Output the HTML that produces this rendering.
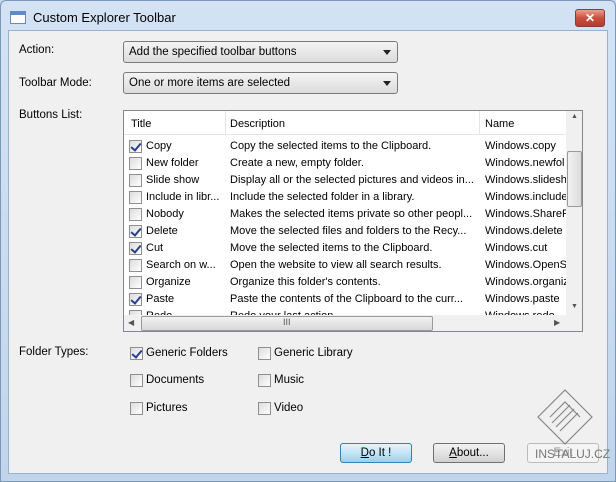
<!DOCTYPE html>
<html><head><style>
*{box-sizing:border-box;margin:0;padding:0}
body{width:616px;height:482px;overflow:hidden;background:#c5d9ee;font-family:"Liberation Sans",sans-serif;font-size:11.5px;color:#000;position:relative}
.frame{position:absolute;left:0;top:0;width:616px;height:482px;background:linear-gradient(#d3e3f4,#c0d5ec);border:1px solid #7e97b6;border-radius:6px 6px 0 0}
.title{position:absolute;left:33px;top:10px;font-size:13px;color:#000}
.ticon{position:absolute;left:10px;top:11px;width:16px;height:13px;border:1px solid #6e8aad;background:#fff}
.ticon:before{content:"";position:absolute;left:0;top:0;right:0;height:3px;background:#5c8bd0}
.close{position:absolute;left:575px;top:9px;width:30px;height:18px;border:1px solid #8a3b36;border-radius:3px;background:linear-gradient(#e8a091,#c9503f 50%,#b83a2a);color:#fff;font-weight:bold;text-align:center;font-size:12px;line-height:16px}
.content{position:absolute;left:8px;top:30px;width:600px;height:444px;background:#f0f0f0;border:1px solid #9ab0cc}
.a{position:absolute;white-space:nowrap}
.combo{position:absolute;left:123px;width:275px;height:22px;border:1px solid #7a7a7a;border-radius:3px;background:linear-gradient(#f4f4f4,#e8e8e8 50%,#dcdcdc);padding:4px 5px;font-size:11.5px}
.combo:after{content:"";position:absolute;right:6px;top:8px;border:4px solid transparent;border-top:5px solid #222;border-bottom:0}
.list{position:absolute;left:123px;top:110px;width:460px;height:222px;border:1px solid #828790;background:#fff;overflow:hidden;font-size:11px}
.hdr{position:absolute;top:0;left:0;height:24px;width:442px;border-bottom:1px solid #e5e5e5}
.hdr div{position:absolute;top:7px}
.sep{position:absolute;top:0;width:1px;height:24px;background:#e5e5e5}
.row{position:absolute;left:0;height:17px;width:442px}
.row span{position:absolute;top:2px;white-space:nowrap}
.cb{position:absolute;width:13px;height:13px;border:1px solid #8f8f8f;background:linear-gradient(135deg,#dcdcdc,#fff)}
.cb.on:after{content:"";position:absolute;left:3px;top:0px;width:4px;height:8px;border:solid #2a3f8a;border-width:0 2px 2px 0;transform:rotate(40deg)}
.vs{position:absolute;left:442px;top:0;width:17px;height:204px;background:#f0f0f0}
.hs{position:absolute;left:0;top:204px;width:459px;height:17px;background:#f0f0f0}
.thumb{position:absolute;border:1px solid #9a9a9a;border-radius:2px;background:linear-gradient(90deg,#f2f2f2,#dcdcdc)}
.btn{position:absolute;top:443px;width:72px;height:20px;border:1px solid #707070;border-radius:3px;background:linear-gradient(#f2f2f2,#e3e3e3 50%,#d0d0d0);text-align:center;line-height:18px}
</style></head><body>
<div class="frame"></div>
<div class="ticon"></div>
<div class="title">Custom Explorer Toolbar</div>
<div class="close">✕</div>
<div class="content"></div>
<div class="a" style="left:19px;top:44px">Action:</div>
<div class="combo" style="top:41px">Add the specified toolbar buttons</div>
<div class="a" style="left:19px;top:77px">Toolbar Mode:</div>
<div class="combo" style="top:72px">One or more items are selected</div>
<div class="a" style="left:19px;top:109px">Buttons List:</div>
<div class="list">
<div class="hdr"><div style="left:7px">Title</div><div style="left:106px">Description</div><div style="left:361px">Name</div></div>
<div class="sep" style="left:101px"></div><div class="sep" style="left:355px"></div>
<div class="row" style="top:27px"><div class="cb on" style="left:5px;top:2px"></div><span style="left:22px">Copy</span><span style="left:106px">Copy the selected items to the Clipboard.</span><span style="left:361px">Windows.copy</span></div>
<div class="row" style="top:44px"><div class="cb" style="left:5px;top:2px"></div><span style="left:22px">New folder</span><span style="left:106px">Create a new, empty folder.</span><span style="left:361px">Windows.newfol</span></div>
<div class="row" style="top:61px"><div class="cb" style="left:5px;top:2px"></div><span style="left:22px">Slide show</span><span style="left:106px">Display all or the selected pictures and videos in...</span><span style="left:361px">Windows.slidesh</span></div>
<div class="row" style="top:78px"><div class="cb" style="left:5px;top:2px"></div><span style="left:22px">Include in libr...</span><span style="left:106px">Include the selected folder in a library.</span><span style="left:361px">Windows.include</span></div>
<div class="row" style="top:95px"><div class="cb" style="left:5px;top:2px"></div><span style="left:22px">Nobody</span><span style="left:106px">Makes the selected items private so other peopl...</span><span style="left:361px">Windows.ShareP</span></div>
<div class="row" style="top:112px"><div class="cb on" style="left:5px;top:2px"></div><span style="left:22px">Delete</span><span style="left:106px">Move the selected files and folders to the Recy...</span><span style="left:361px">Windows.delete</span></div>
<div class="row" style="top:129px"><div class="cb on" style="left:5px;top:2px"></div><span style="left:22px">Cut</span><span style="left:106px">Move the selected items to the Clipboard.</span><span style="left:361px">Windows.cut</span></div>
<div class="row" style="top:146px"><div class="cb" style="left:5px;top:2px"></div><span style="left:22px">Search on w...</span><span style="left:106px">Open the website to view all search results.</span><span style="left:361px">Windows.OpenS</span></div>
<div class="row" style="top:163px"><div class="cb" style="left:5px;top:2px"></div><span style="left:22px">Organize</span><span style="left:106px">Organize this folder's contents.</span><span style="left:361px">Windows.organiz</span></div>
<div class="row" style="top:180px"><div class="cb on" style="left:5px;top:2px"></div><span style="left:22px">Paste</span><span style="left:106px">Paste the contents of the Clipboard to the curr...</span><span style="left:361px">Windows.paste</span></div>
<div class="row" style="top:197px"><div class="cb" style="left:5px;top:2px"></div><span style="left:22px">Redo</span><span style="left:106px">Redo your last action.</span><span style="left:361px">Windows.redo</span></div>
<div class="vs"><div class="a" style="left:5px;top:2px;font-size:7px;color:#555">▲</div><div class="thumb" style="left:1px;top:40px;width:15px;height:56px"></div><div class="a" style="left:5px;top:192px;font-size:7px;color:#555">▼</div></div>
<div class="hs"><div class="a" style="left:4px;top:3px;font-size:8px;color:#555">◀</div><div class="thumb" style="left:17px;top:1px;width:292px;height:15px;background:linear-gradient(#f2f2f2,#d8d8d8)"></div><div class="a" style="left:159px;top:2px;font-size:9px;color:#555">III</div><div class="a" style="left:430px;top:3px;font-size:8px;color:#555">▶</div></div>
<div style="position:absolute;left:442px;top:204px;width:17px;height:17px;background:#f0f0f0"></div>
</div>
<div class="a" style="left:19px;top:346px">Folder Types:</div>
<div class="cb on" style="left:130px;top:347px"></div><div class="a" style="left:146px;top:347px">Generic Folders</div>
<div class="cb" style="left:258px;top:347px"></div><div class="a" style="left:274px;top:347px">Generic Library</div>
<div class="cb" style="left:130px;top:374px"></div><div class="a" style="left:146px;top:374px">Documents</div>
<div class="cb" style="left:258px;top:374px"></div><div class="a" style="left:274px;top:374px">Music</div>
<div class="cb" style="left:130px;top:402px"></div><div class="a" style="left:146px;top:402px">Pictures</div>
<div class="cb" style="left:258px;top:402px"></div><div class="a" style="left:274px;top:402px">Video</div>
<div class="btn" style="left:340px;border-color:#3c7fb1;background:linear-gradient(#e5f4fc,#c4e5f6 50%,#98d1ef)"><u>D</u>o It !</div>
<div class="btn" style="left:433px"><u>A</u>bout...</div>
<div class="btn" style="left:527px;color:#999;border-color:#bbb;background:#f4f4f4">Exit</div>
<svg style="position:absolute;left:530px;top:385px" width="70" height="70" viewBox="0 0 70 70"><g fill="none" stroke="#888" stroke-width="1.2"><path d="M35 5 L62 32 L35 59 L8 32 Z"/><path d="M20 32 L35 17 L50 32 M22 38 L40 20 M26 42 L44 24 M30 46 L48 28"/></g></svg>
<div class="a" style="left:535px;top:447px;color:#777;font-size:12px">INSTALUJ.CZ</div>
</body></html>
